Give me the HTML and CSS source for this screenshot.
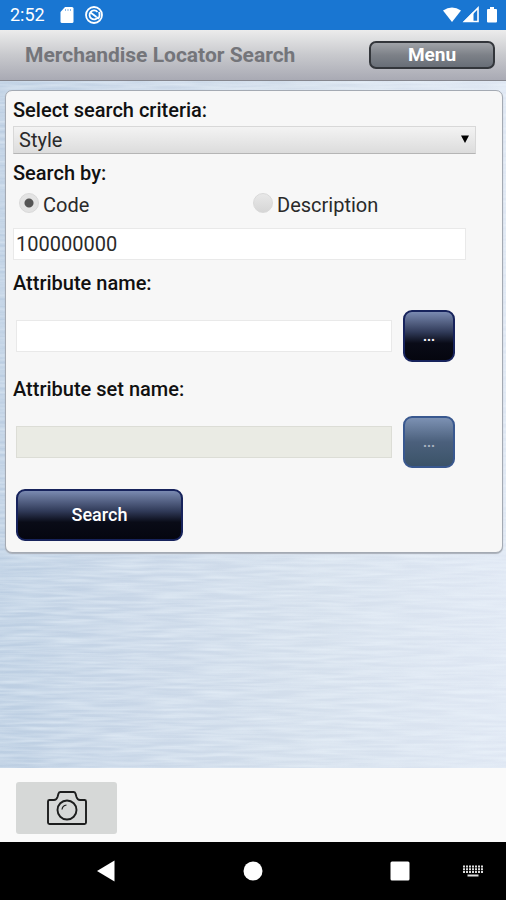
FILE: index.html
```html
<!DOCTYPE html>
<html lang="en">
<head>
<meta charset="utf-8">
<meta name="viewport" content="width=device-width, initial-scale=1">
<title>Merchandise Locator Search</title>
<link rel="stylesheet" href="styles.css">
</head>
<body>
<div class="status">
  <span class="clock">2:52</span>
  <svg class="sd" width="14" height="18" viewBox="0 0 14 18"><path fill="#fff" d="M5 1h7q1.500 0 1.500 1.500v13q0 1.500-1.500 1.500H2q-1.500 0-1.500-1.500V6z"/><path stroke="#1976d2" stroke-width="1" opacity=".5" d="M5.500 3v2M8 3v2M10.500 3v2"/></svg>
  <svg width="20" height="20" viewBox="0 0 20 20" fill="none" stroke="#fff"><circle cx="10" cy="10" r="8" stroke-width="1.800"/><path stroke-width="1.800" d="M14 12a4.500 4.500 0 1 1-.5-5M6.500 7.500l6 4.500M15 7q1.500 4-1 7"/></svg>
  <span class="spacer"></span>
  <svg width="20" height="18" viewBox="0 0 20 18"><path fill="#fff" d="M1 4.500Q10-1.500 19 4.500L10 16z"/></svg>
  <svg width="18" height="18" viewBox="0 0 18 18"><path fill="none" stroke="#fff" stroke-width="1.600" d="M2.500 15.500L16 2v13.500z"/><path fill="#fff" d="M1 16L11.500 5.500V16z"/></svg>
  <svg class="battery" width="12" height="18" viewBox="0 0 12 18"><path fill="#fff" d="M4 1h4v2h2q1 0 1 1v11.500q0 1-1 1H2q-1 0-1-1V4q0-1 1-1h2z"/></svg>
</div>
<header class="bar">
  <h1>Merchandise Locator Search</h1>
  <button class="menu" type="button">Menu</button>
</header>
<main>
  <svg class="brushed" aria-hidden="true">
    <filter id="brush" x="0" y="0" width="100%" height="100%" color-interpolation-filters="sRGB">
      <feTurbulence type="fractalNoise" baseFrequency="0.02 0.3" numOctaves="2" seed="7"/>
      <feColorMatrix values="0 0 0 0 .95  0 0 0 0 .98  0 0 0 0 1  1.200 0 0 0 -.35"/>
    </filter>
    <rect width="100%" height="100%" filter="url(#brush)"/>
  </svg>
  <form class="card">
    <label class="caption" for="criteria">Select search criteria:</label>
    <div class="picker">
      <select id="criteria"><option>Style</option></select>
      <svg width="8" height="8" viewBox="0 0 8 8"><path d="M0 .5h8L4 8z"/></svg>
    </div>
    <fieldset>
      <legend class="caption">Search by:</legend>
      <div class="choices">
        <label><input type="radio" name="by" checked>Code</label>
        <label><input type="radio" name="by">Description</label>
      </div>
    </fieldset>
    <input class="field code" type="text" value="100000000" aria-label="Code">
    <label class="caption" for="attr">Attribute name:</label>
    <div class="lookup">
      <input class="field" id="attr" type="text">
      <button class="dark" type="button">...</button>
    </div>
    <label class="caption" for="set">Attribute set name:</label>
    <div class="lookup">
      <input class="field" id="set" type="text" disabled>
      <button class="dark" type="button" disabled>...</button>
    </div>
    <button class="dark search" type="button">Search</button>
  </form>
</main>
<footer>
  <button class="camera" type="button" aria-label="Camera">
    <svg width="42" height="36" viewBox="0 0 42 36" fill="none" stroke="#1c1d1d" stroke-width="1.900" stroke-linejoin="round"><path d="M3.500 10H8q2.500 0 3.500-3l1-3.500Q13 2 14.500 2h13Q29 2 29.500 3.500l1 3.500q1 3 3.500 3h4.500Q40 10 40 11.500v21q0 1.500-1.500 1.500h-35Q2 34 2 32.500v-21Q2 10 3.500 10z"/><circle cx="21" cy="20" r="9.500"/><path stroke-width="1.200" d="M16 19.500q.500-4 4.500-4.500"/></svg>
  </button>
</footer>
<nav>
  <button type="button" aria-label="Back"><svg width="20" height="22" viewBox="0 0 20 22"><path fill="#fff" d="M18.500 .5v21L1 11z"/></svg></button>
  <button type="button" aria-label="Home"><svg width="20" height="20" viewBox="0 0 20 20"><circle fill="#fff" cx="10" cy="10" r="9.500"/></svg></button>
  <button class="recent" type="button" aria-label="Recent apps"><svg width="20" height="20" viewBox="0 0 20 20"><rect fill="#fff" width="19" height="19" x=".5" y=".5" rx="1.500"/></svg></button>
  <button type="button" aria-label="Keyboard"><svg width="20" height="12" viewBox="0 0 20 12"><path stroke="#ddd" stroke-width="2" stroke-dasharray="2 1" d="M0 1.500h20M0 4.200h20M0 7h20"/><path stroke="#ddd" stroke-width="2" d="M4.500 10.500h11"/></svg></button>
</nav>
</body>
</html>
```
FILE: styles.css
```css
* { box-sizing: border-box; }
body {
  margin: 0;
  min-height: 100vh;
  display: flex;
  flex-direction: column;
  font: 20px/24px Roboto, "Liberation Sans", sans-serif;
  color: #2a2a2a;
}
button, input, select { font: inherit; color: inherit; margin: 0; }
svg { display: block; flex: none; }

.status {
  display: flex;
  align-items: center;
  height: 30px;
  padding: 0 8px 0 10px;
  background: #1976d2;
  color: #fff;
  font-size: 18px;
}
.sd { margin: 0 10px 0 15px; }
.spacer { flex: 1; }
.battery { margin-left: 6px; }

.bar {
  display: flex;
  align-items: center;
  justify-content: space-between;
  height: 51px;
  padding: 0 11px 0 25px;
  background: linear-gradient(#ececec, #c8c9cd 50%, #a9aab4);
  border-bottom: 1px solid #85868e;
}
h1 { margin: 0; font-size: 21px; font-weight: 700; color: #74757a; }
.menu {
  width: 126px;
  height: 28px;
  padding: 0;
  border: 2px solid #33363b;
  border-radius: 7px;
  background: linear-gradient(#a0a3a8, #7d8188 50%, #686e77);
  color: #fff;
  font-size: 19px;
  line-height: 22px;
  font-weight: 700;
}

main {
  position: relative;
  flex: 1;
  padding: 9px 3px 0 5px;
  background: linear-gradient(90deg, #bccee2, #c8d6e7 25%, #d4dfec 60%, #dfe7f3);
}
.brushed { position: absolute; inset: 0; width: 100%; height: 100%; opacity: .7; }
.card {
  position: relative;
  padding: 7px 26px 11px 7px;
  border: 1px solid #a4aab3;
  border-radius: 7px;
  background: #f7f7f7;
  box-shadow: 0 1px 1px #a9afb8;
}
.caption { display: block; padding: 0; font-size: 20px; font-weight: 500; color: #111; }
.picker { position: relative; margin: 4px 0 7px; }
.picker svg { position: absolute; right: 7px; top: 9px; pointer-events: none; }
select {
  display: block;
  appearance: none;
  width: 100%;
  height: 28px;
  padding: 0 5px;
  border: 1px solid #d8d8d8;
  border-bottom-color: #b5b5b5;
  border-radius: 0;
  background: linear-gradient(#f3f3f3, #dcdcdc);
}
fieldset { margin: 0; padding: 0; border: 0; }
.choices { display: grid; grid-template-columns: 234px 1fr; padding: 8px 0 11px 6px; }
.choices label { display: flex; gap: 4px; }
input[type="radio"] {
  appearance: none;
  width: 20px;
  height: 20px;
  border: 1px solid #d9d9d9;
  border-radius: 50%;
  background: linear-gradient(#e8e8e8, #d6d6d6);
}
input[type="radio"]:checked { background: radial-gradient(circle, #555 4px, #e3e3e3 5px); }
.field {
  display: block;
  height: 32px;
  padding: 0 2px;
  border: 1px solid #e9e9e9;
  border-radius: 0;
  background: #fff;
}
.field:disabled { background: #eaebe4; border-color: #dcddd6; }
.code { width: calc(100% - 10px); margin-bottom: 11px; }
.lookup { display: flex; align-items: center; gap: 11px; padding: 15px 21px 15px 3px; }
.lookup .field { flex: 1; min-width: 0; }
.dark {
  width: 52px;
  height: 52px;
  padding: 0;
  border: 2px solid #17235c;
  border-radius: 9px;
  background: linear-gradient(#7a8ab1, #303a58 42%, #090b17 65%, #05060f);
  color: #fff;
}
.dark:disabled { border-color: #39588f; background: linear-gradient(#7c91b3, #4b607c 50%, #3b5368); color: #aab5c2; }
.lookup .dark { font-size: 14px; font-weight: 700; }
.search { display: block; width: 167px; margin: 6px 0 0 3px; font-size: 18px; font-weight: 500; }

footer { padding: 14px 16px 8px; background: #fafafa; }
.camera {
  display: grid;
  place-items: center;
  width: 101px;
  height: 52px;
  padding: 0;
  border: 0;
  border-radius: 3px;
  background: #d6d8d7;
}
nav {
  display: grid;
  grid-template-columns: 42fr 16fr 13fr 16fr 13fr;
  align-items: center;
  background: #000;
}
nav button { display: grid; place-items: center; height: 58px; padding: 0; border: 0; background: none; }
.recent { grid-column: 4; }
```
